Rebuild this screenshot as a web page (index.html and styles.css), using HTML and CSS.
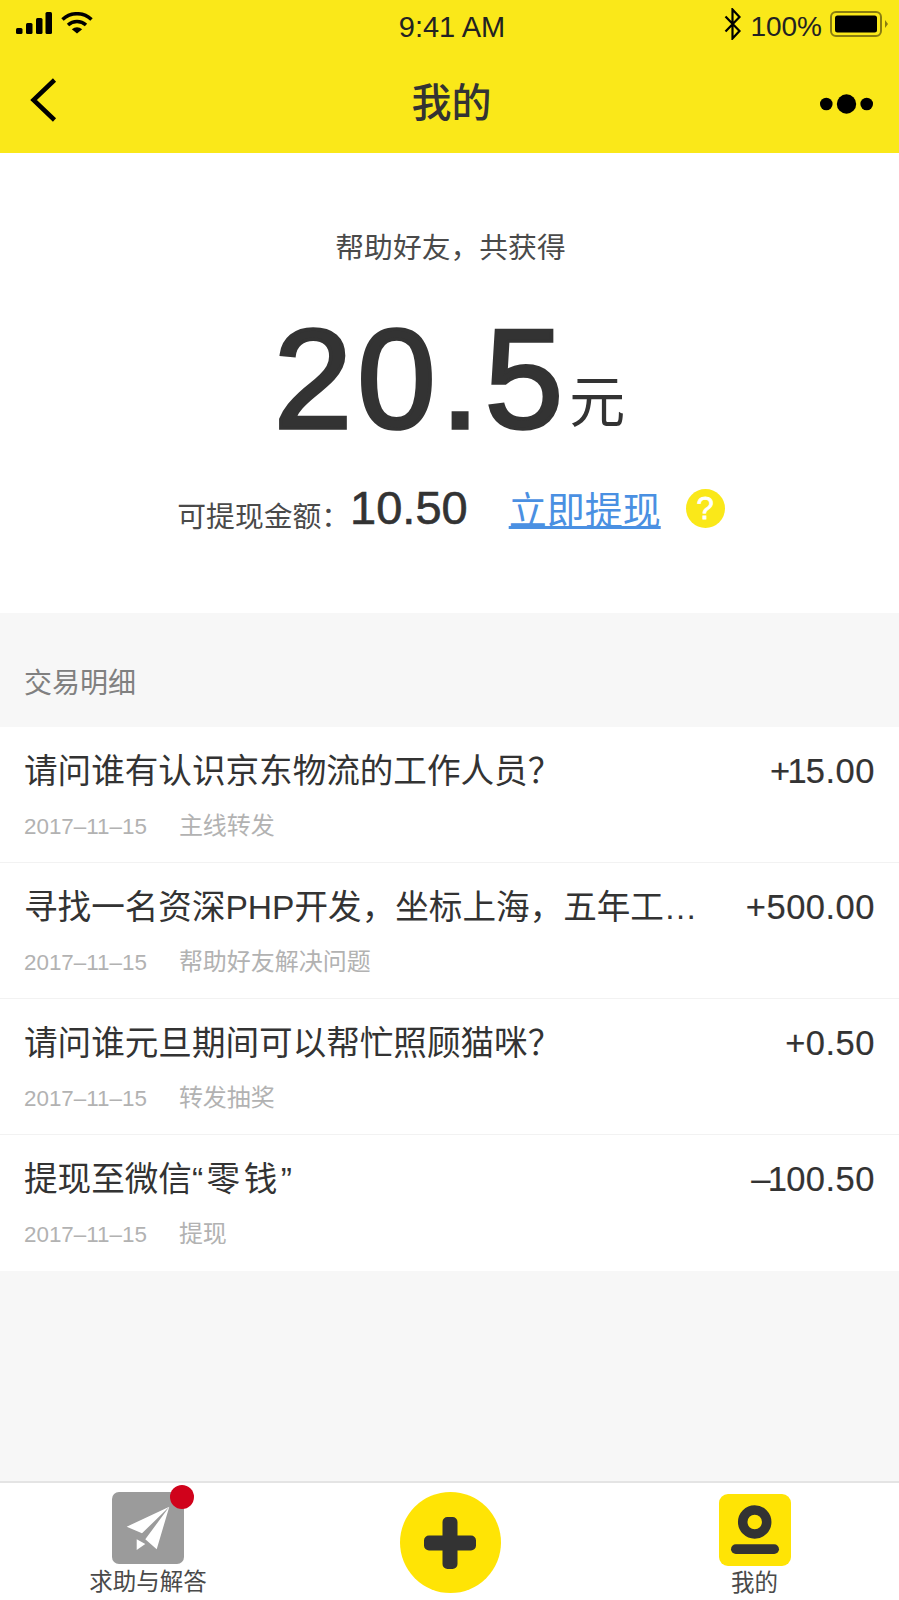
FILE: index.html
```html
<!DOCTYPE html>
<html lang="zh-CN">
<head>
<meta charset="utf-8">
<title>我的</title>
<link rel="stylesheet" href="styles.css">
</head>
<body>
<div class="app">
  <header class="top">
    <div class="status">
      <div class="status-left">
        <svg class="ico-signal" width="36" height="22" viewBox="0 0 36 22"><rect x="0" y="16" width="6.500" height="6" rx="1.500"/><rect x="10" y="11" width="6.500" height="11" rx="1.500"/><rect x="20" y="6" width="6.500" height="16" rx="1.500"/><rect x="29.500" y="0" width="6.500" height="22" rx="1.500"/></svg>
        <svg class="ico-wifi" width="32" height="22" viewBox="0 0 32 22"><path d="M16 21.500 10.800 17.200a8.500 8.500 0 0 1 10.400 0z"/><path d="M1.500 7.500a21 21 0 0 1 29 0" fill="none" stroke="#000" stroke-width="3.500"/><path d="M7 13a13.500 13.500 0 0 1 18 0" fill="none" stroke="#000" stroke-width="3.500"/></svg>
      </div>
      <div class="time">9:41 AM</div>
      <div class="status-right">
        <svg class="ico-bt" width="18" height="32" viewBox="0 0 18 32"><path d="M1.500 8.500 15.500 23 8.500 30.500V1.500L15.500 9 1.500 23.500" fill="none" stroke="#000" stroke-width="2.200"/></svg>
        <span class="pct">100%</span>
        <svg class="ico-batt" width="58" height="26" viewBox="0 0 58 26"><rect x="1" y="1" width="50" height="24" rx="5" fill="none" stroke="#8a7d10" stroke-width="2"/><rect x="5" y="4.500" width="42" height="17" rx="2.500" fill="#000"/><path d="M55 9 58 13 55 17z" fill="#8a7d10"/></svg>
      </div>
    </div>
    <nav class="nav">
      <svg class="ico-back" width="28" height="44" viewBox="0 0 28 44"><path d="M24.500 2 3.500 22 24.500 42" fill="none" stroke="#000" stroke-width="4.500"/></svg>
      <h1 class="title">我的</h1>
      <svg class="ico-more" width="53" height="20" viewBox="0 0 53 20"><circle cx="6.300" cy="10" r="6.300"/><circle cx="26.500" cy="10" r="9.700"/><circle cx="46.700" cy="10" r="6.300"/></svg>
    </nav>
  </header>

  <section class="hero">
    <p class="hero-label">帮助好友，共获得</p>
    <p class="hero-amount"><span class="num">20.5</span><span class="unit">元</span></p>
    <div class="hero-row">
      <span class="avail-label">可提现金额：</span>
      <span class="avail-num">10.50</span>
      <a class="withdraw" href="#">立即提现</a>
      <span class="help">?</span>
    </div>
  </section>

  <main class="details">
    <h2 class="details-head">交易明细</h2>
    <ul class="list">
      <li class="item">
        <div class="item-top"><span class="item-title">请问谁有认识京东物流的工作人员？</span><span class="item-amt">+<span class="one">1</span>5.00</span></div>
        <div class="item-sub"><span class="item-date">2017–11–15</span><span class="item-kind">主线转发</span></div>
      </li>
      <li class="item">
        <div class="item-top"><span class="item-title">寻找一名资深PHP开发，坐标上海，五年工…</span><span class="item-amt">+500.00</span></div>
        <div class="item-sub"><span class="item-date">2017–11–15</span><span class="item-kind">帮助好友解决问题</span></div>
      </li>
      <li class="item">
        <div class="item-top"><span class="item-title">请问谁元旦期间可以帮忙照顾猫咪？</span><span class="item-amt">+0.50</span></div>
        <div class="item-sub"><span class="item-date">2017–11–15</span><span class="item-kind">转发抽奖</span></div>
      </li>
      <li class="item">
        <div class="item-top"><span class="item-title">提现至微信<span class="quoted">“零钱”</span></span><span class="item-amt">–<span class="one">1</span>00.50</span></div>
        <div class="item-sub"><span class="item-date">2017–11–15</span><span class="item-kind">提现</span></div>
      </li>
    </ul>
  </main>

  <footer class="tabs">
    <div class="tab tab-ask">
      <span class="tab-icon tab-icon-gray">
        <svg width="72" height="72" viewBox="0 0 72 72"><path fill="#fff" d="M57.300 14.700 14.700 34.700 30 41.300zM57.300 14.700 33.300 47.300 44.700 57.300zM24.700 47.300 33.300 52 24.700 58z"/></svg>
        <span class="badge"></span>
      </span>
      <span class="tab-label">求助与解答</span>
    </div>
    <div class="tab tab-add">
      <span class="add">
        <svg width="52" height="52" viewBox="0 0 52 52"><path fill="#333" d="M18.500 5a5 5 0 0 1 5-5h5a5 5 0 0 1 5 5v13.500H47a5 5 0 0 1 5 5v5a5 5 0 0 1-5 5H33.500V47a5 5 0 0 1-5 5h-5a5 5 0 0 1-5-5V33.500H5a5 5 0 0 1-5-5v-5a5 5 0 0 1 5-5h13.500z"/></svg>
      </span>
    </div>
    <div class="tab tab-me">
      <span class="tab-icon tab-icon-yellow">
        <svg width="72" height="72" viewBox="0 0 72 72"><circle cx="35.700" cy="28" r="12" fill="none" stroke="#333" stroke-width="9.500"/><rect x="12" y="50.300" width="48" height="9.700" rx="4.850" fill="#333"/></svg>
      </span>
      <span class="tab-label">我的</span>
    </div>
  </footer>
</div>
</body>
</html>
```

FILE: styles.css
```css
* { box-sizing: border-box; }

html, body {
  margin: 0;
  padding: 0;
  background: #f7f7f7;
}

body {
  font-family: "Liberation Sans", "Noto Sans CJK SC", sans-serif;
  color: #333;
}

.app {
  display: flex;
  flex-direction: column;
  height: 1600px;
  overflow: hidden;
}

/* Yellow header: status bar plus navigation */
.top {
  height: 153px;
  background: #fae819;
  flex: none;
}

.status {
  height: 56px;
  padding: 0 11px 0 16px;
  display: grid;
  grid-template-columns: 1fr auto 1fr;
  align-items: center;
  color: #222;
}

.status-left {
  display: flex;
  align-items: center;
  gap: 9px;
  margin-top: -10px;
}

.status-right {
  display: flex;
  align-items: center;
  justify-content: flex-end;
  gap: 8px;
  margin-top: -8px;
}

.time {
  font-size: 29px;
  line-height: 32px;
  margin-top: -2px;
}

.pct {
  font-size: 28px;
  line-height: 32px;
  margin-top: 6px;
}

.nav {
  height: 97px;
  padding: 0 26px 10px 30px;
  display: grid;
  grid-template-columns: 1fr auto 1fr;
  align-items: center;
}

.title {
  margin: 6px 0 0;
  font-size: 40px;
  line-height: 56px;
  font-weight: 500;
}

.ico-more {
  justify-self: end;
  margin-top: 8px;
}

/* Earnings summary */
.hero {
  height: 460px;
  flex: none;
  background: #fff;
  padding-top: 75px;
  text-align: center;
}

.hero-label {
  margin: 0;
  padding-left: 2px;
  font-size: 28.800px;
  line-height: 40px;
  color: #4a4a4a;
}

.hero-amount {
  margin: 36px 0 0;
  height: 148px;
  display: flex;
  justify-content: center;
  align-items: baseline;
  line-height: 150px;
}

.num {
  font-size: 141px;
  letter-spacing: 5px;
  -webkit-text-stroke: 3.500px #333;
}

.unit {
  align-self: flex-end;
  font-size: 56px;
  line-height: 56px;
  margin: 0 0 21px 1px;
}

.hero-row {
  margin-top: 28px;
  display: flex;
  justify-content: center;
  align-items: baseline;
  padding-left: 3px;
}

.avail-label {
  align-self: flex-end;
  font-size: 28.800px;
  line-height: 40px;
  margin-bottom: -1px;
  color: #4a4a4a;
}

.avail-num {
  font-size: 47px;
  line-height: 56px;
  -webkit-text-stroke: 0.600px #333;
}

.withdraw {
  font-size: 38px;
  line-height: 48px;
  color: #4a90e2;
  margin-left: 41px;
}

.help {
  align-self: center;
  width: 39px;
  height: 39px;
  margin-left: 25px;
  border-radius: 50%;
  background: #fae819;
  color: #fff;
  font-size: 31px;
  -webkit-text-stroke: 0.800px #fff;
  line-height: 39px;
}

/* Transaction list */
.details {
  flex: 1;
  background: #f7f7f7;
  min-height: 0;
}

.details-head {
  margin: 0;
  height: 114px;
  padding: 0 24px 0;
  font-size: 28px;
  font-weight: 400;
  line-height: 142px;
  color: #808080;
}

.list {
  margin: 0;
  padding: 0;
  list-style: none;
  background: #fff;
}

.item {
  height: 136px;
  padding: 21px 24px 0;
  border-bottom: 1px solid #f2f2f2;
}

.item:last-child { border-bottom: 0; }

.item-top {
  display: flex;
  justify-content: space-between;
  align-items: baseline;
  gap: 36px;
}

.item-title {
  flex: 1;
  min-width: 0;
  font-size: 33.600px;
  line-height: 46px;
  white-space: nowrap;
  overflow: hidden;
  text-overflow: ellipsis;
}

/* Curly quotes sit wider in this title */
.quoted {
  letter-spacing: 3.500px;
}

.item-amt {
  flex: none;
  font-size: 34.500px;
  letter-spacing: 0.500px;
  line-height: 46px;
  -webkit-text-stroke: 0.200px #333;
}

/* The digit one sets narrower than the other figures */
.one {
  margin: 0 -0.040em 0 -0.090em;
}

.item-sub {
  margin-top: 14px;
  display: flex;
  align-items: baseline;
  color: #b2b2b2;
}

.item-date {
  font-size: 22.400px;
  line-height: 34px;
}

.item-kind {
  margin-left: 32px;
  font-size: 24px;
  line-height: 34px;
}

/* Bottom tab bar */
.tabs {
  flex: none;
  height: 119px;
  background: #fff;
  border-top: 2px solid #e4e4e4;
  display: grid;
  grid-template-columns: 296px 308px 295px;
}

.tab {
  display: flex;
  flex-direction: column;
  align-items: center;
}

.tab-ask { padding-top: 9px; }
.tab-add { padding-top: 9px; }
.tab-me { padding-top: 11px; padding-left: 6px; }

.tab-icon {
  position: relative;
  display: block;
  width: 72px;
  height: 72px;
  border-radius: 7px;
}

.tab-icon svg { display: block; }
.tab-icon-gray { background: #9b9b9b; }
.tab-icon-yellow { background: #ffe405; border-radius: 9px; }

.badge {
  position: absolute;
  top: -7px;
  right: -10px;
  width: 24px;
  height: 24px;
  border-radius: 50%;
  background: #d0021b;
}

.tab-label {
  font-size: 23.500px;
  line-height: 32px;
  color: #4a4a4a;
}

.tab-ask .tab-label { margin-top: 2px; }
.tab-me .tab-label { margin-top: 1px; }

.add {
  width: 101px;
  height: 101px;
  border-radius: 50%;
  background: #ffe405;
  display: flex;
  align-items: center;
  justify-content: center;
}

.add svg { display: block; }
```
